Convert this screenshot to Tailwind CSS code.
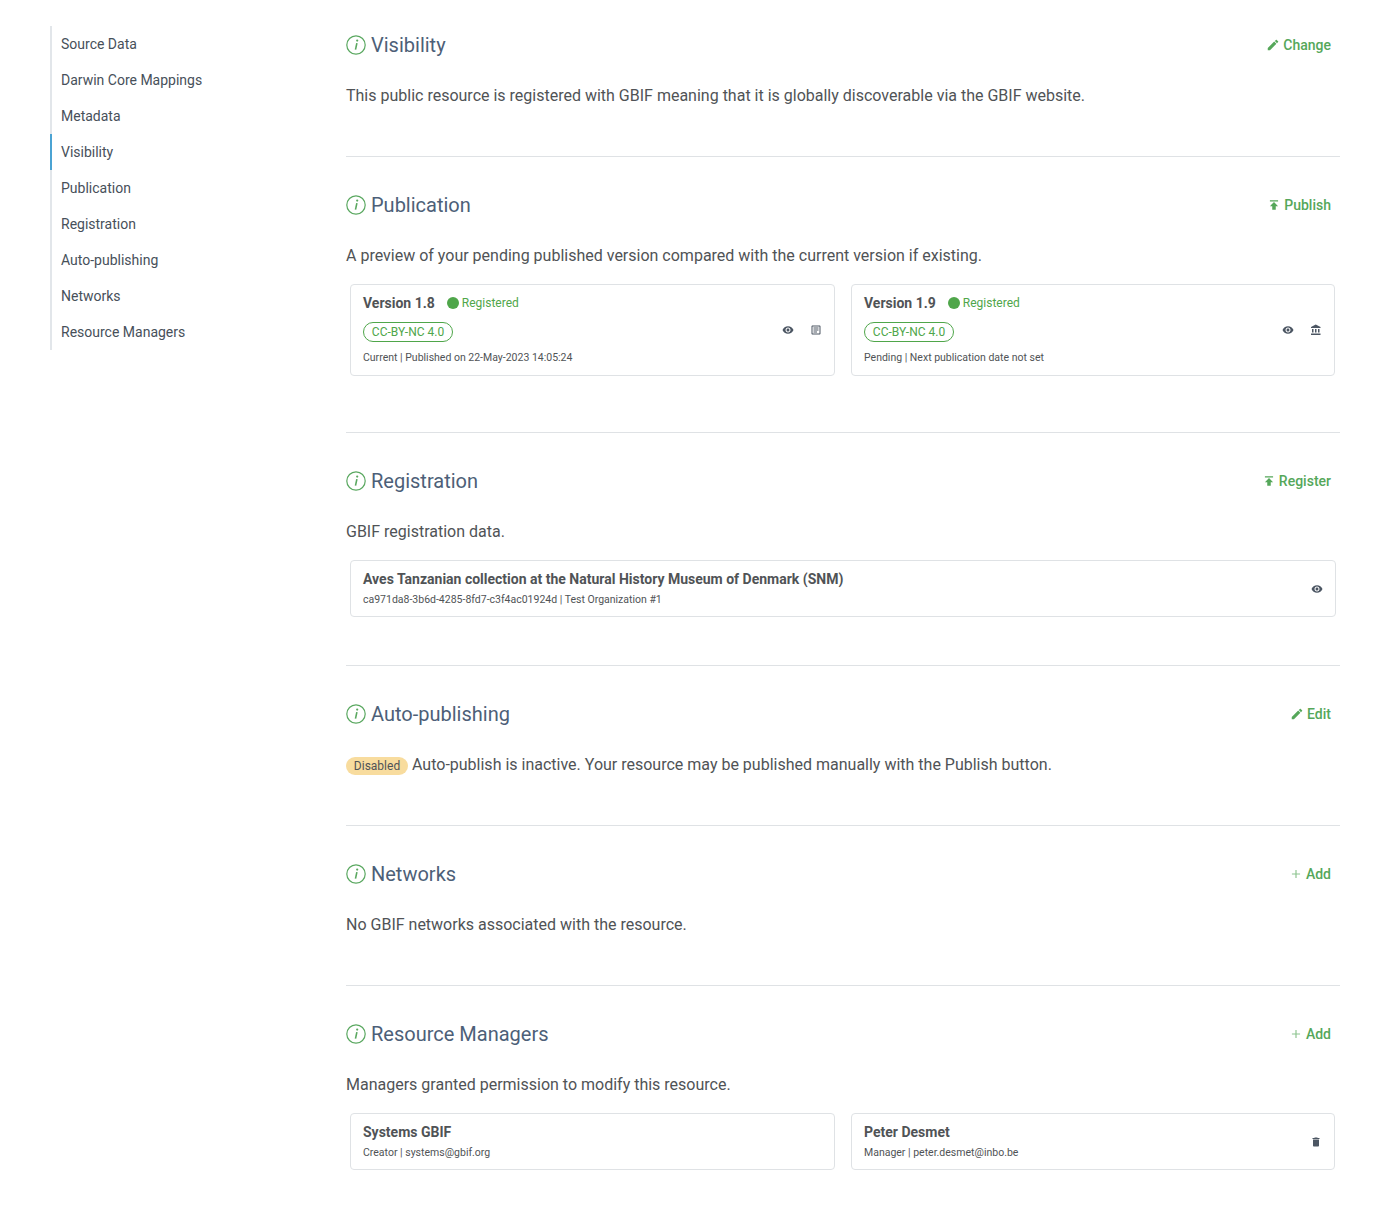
<!DOCTYPE html>
<html lang="en">
<head>
    <meta charset="UTF-8">
    <title>Resource Overview</title>
    <script src="https://cdn.jsdelivr.net/npm/@tailwindcss/browser@4"></script>
</head>
<body class="bg-white font-['Roboto',sans-serif] text-[#505356]">
    <div class="flex items-start">
        <!-- Sidebar -->
        <nav class="ml-[50px] mt-[26px] w-[296px] shrink-0">
            <ul class="border-l-2 border-[#e2e6ea] text-sm text-[#47505a] w-[250px]">
                <li class="h-9 leading-9 pl-[9px]">Source Data</li>
                <li class="h-9 leading-9 pl-[9px]">Darwin Core Mappings</li>
                <li class="h-9 leading-9 pl-[9px]">Metadata</li>
                <li class="h-9 leading-9 pl-[9px] -ml-0.5 border-l-2 border-[#4ba3d3]">Visibility</li>
                <li class="h-9 leading-9 pl-[9px]">Publication</li>
                <li class="h-9 leading-9 pl-[9px]">Registration</li>
                <li class="h-9 leading-9 pl-[9px]">Auto-publishing</li>
                <li class="h-9 leading-9 pl-[9px]">Networks</li>
                <li class="h-9 leading-9 pl-[9px]">Resource Managers</li>
            </ul>
        </nav>

        <main class="w-[994px] pt-[25px]">
            <!-- Visibility -->
            <section class="h-[132px] border-b border-[#dfe2e5]">
                <div class="flex items-center justify-between h-10 pr-[9px]">
                    <h2 class="flex items-center gap-[5px] text-xl text-[#4d5f78]">
                        <svg class="w-5 h-5" viewBox="0 0 20 20" fill="none" stroke="#5aa860"><circle cx="10" cy="10" r="9.2" stroke-width="1.2"/><path d="M10.9 8.2 9.5 14.6" stroke-width="1.6"/><circle cx="11.2" cy="5.6" r="1.1" fill="#5aa860" stroke="none"/></svg>
                        Visibility
                    </h2>
                    <a class="flex items-center gap-[3px] text-sm font-medium text-[#55a75a]">
                        <svg class="w-[14px] h-[14px]" viewBox="0 0 24 24" fill="currentColor"><path d="M3 17.25V21h3.75L17.81 9.94l-3.75-3.75L3 17.25zM20.71 7.04c.39-.39.39-1.02 0-1.41l-2.34-2.34c-.39-.39-1.02-.39-1.41 0l-1.83 1.83 3.75 3.75 1.83-1.83z"/></svg>
                        Change
                    </a>
                </div>
                <p class="mt-[19px] text-base leading-6">This public resource is registered with GBIF meaning that it is globally discoverable via the GBIF website.</p>
            </section>

            <!-- Publication -->
            <section class="h-[276px] pt-[28px] border-b border-[#dfe2e5]">
                <div class="flex items-center justify-between h-10 pr-[9px]">
                    <h2 class="flex items-center gap-[5px] text-xl text-[#4d5f78]">
                        <svg class="w-5 h-5" viewBox="0 0 20 20" fill="none" stroke="#5aa860"><circle cx="10" cy="10" r="9.2" stroke-width="1.2"/><path d="M10.9 8.2 9.5 14.6" stroke-width="1.6"/><circle cx="11.2" cy="5.6" r="1.1" fill="#5aa860" stroke="none"/></svg>
                        Publication
                    </h2>
                    <a class="flex items-center gap-[3px] text-sm font-medium text-[#55a75a]">
                        <svg class="w-[14px] h-[14px]" viewBox="0 0 24 24" fill="currentColor"><path d="M5 4v2h14V4H5zm0 10h4v6h6v-6h4l-7-7-7 7z"/></svg>
                        Publish
                    </a>
                </div>
                <p class="mt-[19px] text-base leading-6">A preview of your pending published version compared with the current version if existing.</p>
                <div class="mt-4 ml-1 grid grid-cols-[485px_484px] gap-4">
                    <div class="h-[92px] border border-[#dfe2e5] rounded flex items-center justify-between pl-3 pr-[12px]">
                        <div>
                            <div class="flex items-center h-[17px]">
                                <strong class="text-sm font-bold">Version 1.8</strong>
                                <span class="ml-3 w-3 h-3 rounded-full bg-[#4fa64a]"></span>
                                <span class="ml-[3px] text-xs text-[#4fa64a]">Registered</span>
                            </div>
                            <div class="mt-[10px] w-[90px] h-5 border border-[#4fa64a] rounded-[10px] text-xs leading-[18px] text-center text-[#4fa64a]">CC-BY-NC 4.0</div>
                            <p class="mt-2 text-[10.5px] leading-[16px]">Current | Published on 22-May-2023 14:05:24</p>
                        </div>
                        <div class="flex items-center gap-4 text-[#4c5663]">
                            <svg class="w-3 h-3" viewBox="0 0 24 24" fill="currentColor"><path d="M12 4.5C7 4.5 2.73 7.61 1 12c1.73 4.39 6 7.5 11 7.5s9.27-3.11 11-7.5c-1.73-4.39-6-7.5-11-7.5zM12 17c-2.76 0-5-2.24-5-5s2.24-5 5-5 5 2.24 5 5-2.24 5-5 5zm0-8c-1.66 0-3 1.34-3 3s1.34 3 3 3 3-1.34 3-3-1.34-3-3-3z"/></svg>
                            <svg class="w-3 h-3" viewBox="0 0 24 24" fill="currentColor"><path d="M19 3H5c-1.1 0-2 .9-2 2v14c0 1.1.9 2 2 2h14c1.1 0 2-.9 2-2V5c0-1.1-.9-2-2-2zm0 16H5V5h14v14z"/><path d="M7 7h10v2H7zm0 4h10v2H7zm0 4h7v2H7z"/></svg>
                        </div>
                    </div>
                    <div class="h-[92px] border border-[#dfe2e5] rounded flex items-center justify-between pl-3 pr-[12px]">
                        <div>
                            <div class="flex items-center h-[17px]">
                                <strong class="text-sm font-bold">Version 1.9</strong>
                                <span class="ml-3 w-3 h-3 rounded-full bg-[#4fa64a]"></span>
                                <span class="ml-[3px] text-xs text-[#4fa64a]">Registered</span>
                            </div>
                            <div class="mt-[10px] w-[90px] h-5 border border-[#4fa64a] rounded-[10px] text-xs leading-[18px] text-center text-[#4fa64a]">CC-BY-NC 4.0</div>
                            <p class="mt-2 text-[10.5px] leading-[16px]">Pending | Next publication date not set</p>
                        </div>
                        <div class="flex items-center gap-4 text-[#4c5663]">
                            <svg class="w-3 h-3" viewBox="0 0 24 24" fill="currentColor"><path d="M12 4.5C7 4.5 2.73 7.61 1 12c1.73 4.39 6 7.5 11 7.5s9.27-3.11 11-7.5c-1.73-4.39-6-7.5-11-7.5zM12 17c-2.76 0-5-2.24-5-5s2.24-5 5-5 5 2.24 5 5-2.24 5-5 5zm0-8c-1.66 0-3 1.34-3 3s1.34 3 3 3 3-1.34 3-3-1.34-3-3-3z"/></svg>
                            <svg class="w-3 h-3" viewBox="0 0 24 24" fill="currentColor"><path d="M4 10v7h3v-7H4zm6 0v7h3v-7h-3zM2 22h19v-3H2v3zm14-12v7h3v-7h-3zm-4.5-9L2 6v2h19V6l-9.5-5z"/></svg>
                        </div>
                    </div>
                </div>
            </section>

            <!-- Registration -->
            <section class="h-[233px] pt-[28px] border-b border-[#dfe2e5]">
                <div class="flex items-center justify-between h-10 pr-[9px]">
                    <h2 class="flex items-center gap-[5px] text-xl text-[#4d5f78]">
                        <svg class="w-5 h-5" viewBox="0 0 20 20" fill="none" stroke="#5aa860"><circle cx="10" cy="10" r="9.2" stroke-width="1.2"/><path d="M10.9 8.2 9.5 14.6" stroke-width="1.6"/><circle cx="11.2" cy="5.6" r="1.1" fill="#5aa860" stroke="none"/></svg>
                        Registration
                    </h2>
                    <a class="flex items-center gap-[3px] text-sm font-medium text-[#55a75a]">
                        <svg class="w-[14px] h-[14px]" viewBox="0 0 24 24" fill="currentColor"><path d="M5 4v2h14V4H5zm0 10h4v6h6v-6h4l-7-7-7 7z"/></svg>
                        Register
                    </a>
                </div>
                <p class="mt-[19px] text-base leading-6">GBIF registration data.</p>
                <div class="mt-4 ml-1 w-[986px] h-[57px] border border-[#dfe2e5] rounded flex items-center justify-between pl-3 pr-[12px]">
                    <div class="pt-0.5">
                        <strong class="block text-sm font-bold leading-[17px]">Aves Tanzanian collection at the Natural History Museum of Denmark (SNM)</strong>
                        <p class="mt-1 text-[10.5px] leading-[16px]">ca971da8-3b6d-4285-8fd7-c3f4ac01924d | Test Organization #1</p>
                    </div>
                    <svg class="w-3 h-3 text-[#4c5663]" viewBox="0 0 24 24" fill="currentColor"><path d="M12 4.5C7 4.5 2.73 7.61 1 12c1.73 4.39 6 7.5 11 7.5s9.27-3.11 11-7.5c-1.73-4.39-6-7.5-11-7.5zM12 17c-2.76 0-5-2.24-5-5s2.24-5 5-5 5 2.24 5 5-2.24 5-5 5zm0-8c-1.66 0-3 1.34-3 3s1.34 3 3 3 3-1.34 3-3-1.34-3-3-3z"/></svg>
                </div>
            </section>

            <!-- Auto-publishing -->
            <section class="h-[160px] pt-[28px] border-b border-[#dfe2e5]">
                <div class="flex items-center justify-between h-10 pr-[9px]">
                    <h2 class="flex items-center gap-[5px] text-xl text-[#4d5f78]">
                        <svg class="w-5 h-5" viewBox="0 0 20 20" fill="none" stroke="#5aa860"><circle cx="10" cy="10" r="9.2" stroke-width="1.2"/><path d="M10.9 8.2 9.5 14.6" stroke-width="1.6"/><circle cx="11.2" cy="5.6" r="1.1" fill="#5aa860" stroke="none"/></svg>
                        Auto-publishing
                    </h2>
                    <a class="flex items-center gap-[3px] text-sm font-medium text-[#55a75a]">
                        <svg class="w-[14px] h-[14px]" viewBox="0 0 24 24" fill="currentColor"><path d="M3 17.25V21h3.75L17.81 9.94l-3.75-3.75L3 17.25zM20.71 7.04c.39-.39.39-1.02 0-1.41l-2.34-2.34c-.39-.39-1.02-.39-1.41 0l-1.83 1.83 3.75 3.75 1.83-1.83z"/></svg>
                        Edit
                    </a>
                </div>
                <p class="mt-[19px] text-base leading-6 flex items-center">
                    <span class="inline-block mt-0.5 w-[62px] h-[18px] mr-1 rounded-full bg-[#f8dc9e] text-xs leading-[18px] text-center">Disabled</span>
                    Auto-publish is inactive. Your resource may be published manually with the Publish button.
                </p>
            </section>

            <!-- Networks -->
            <section class="h-[160px] pt-[28px] border-b border-[#dfe2e5]">
                <div class="flex items-center justify-between h-10 pr-[9px]">
                    <h2 class="flex items-center gap-[5px] text-xl text-[#4d5f78]">
                        <svg class="w-5 h-5" viewBox="0 0 20 20" fill="none" stroke="#5aa860"><circle cx="10" cy="10" r="9.2" stroke-width="1.2"/><path d="M10.9 8.2 9.5 14.6" stroke-width="1.6"/><circle cx="11.2" cy="5.6" r="1.1" fill="#5aa860" stroke="none"/></svg>
                        Networks
                    </h2>
                    <a class="flex items-center gap-[3px] text-sm font-medium text-[#55a75a]">
                        <svg class="w-[14px] h-[14px]" viewBox="0 0 24 24" fill="#8cc48f"><path d="M19 13h-6v6h-2v-6H5v-2h6V5h2v6h6v2z"/></svg>
                        Add
                    </a>
                </div>
                <p class="mt-[19px] text-base leading-6">No GBIF networks associated with the resource.</p>
            </section>

            <!-- Resource Managers -->
            <section class="pt-[28px]">
                <div class="flex items-center justify-between h-10 pr-[9px]">
                    <h2 class="flex items-center gap-[5px] text-xl text-[#4d5f78]">
                        <svg class="w-5 h-5" viewBox="0 0 20 20" fill="none" stroke="#5aa860"><circle cx="10" cy="10" r="9.2" stroke-width="1.2"/><path d="M10.9 8.2 9.5 14.6" stroke-width="1.6"/><circle cx="11.2" cy="5.6" r="1.1" fill="#5aa860" stroke="none"/></svg>
                        Resource Managers
                    </h2>
                    <a class="flex items-center gap-[3px] text-sm font-medium text-[#55a75a]">
                        <svg class="w-[14px] h-[14px]" viewBox="0 0 24 24" fill="#8cc48f"><path d="M19 13h-6v6h-2v-6H5v-2h6V5h2v6h6v2z"/></svg>
                        Add
                    </a>
                </div>
                <p class="mt-[19px] text-base leading-6">Managers granted permission to modify this resource.</p>
                <div class="mt-4 ml-1 grid grid-cols-[485px_484px] gap-4">
                    <div class="h-[57px] border border-[#dfe2e5] rounded flex items-center pl-3">
                        <div class="pt-0.5">
                            <strong class="block text-sm font-bold leading-[17px]">Systems GBIF</strong>
                            <p class="mt-1 text-[10.5px] leading-[16px]">Creator | systems@gbif.org</p>
                        </div>
                    </div>
                    <div class="h-[57px] border border-[#dfe2e5] rounded flex items-center justify-between pl-3 pr-[12px]">
                        <div class="pt-0.5">
                            <strong class="block text-sm font-bold leading-[17px]">Peter Desmet</strong>
                            <p class="mt-1 text-[10.5px] leading-[16px]">Manager | peter.desmet@inbo.be</p>
                        </div>
                        <svg class="w-3 h-3 text-[#4c5663]" viewBox="0 0 24 24" fill="currentColor"><path d="M6 19c0 1.1.9 2 2 2h8c1.1 0 2-.9 2-2V7H6v12zM19 4h-3.5l-1-1h-5l-1 1H5v2h14V4z"/></svg>
                    </div>
                </div>
            </section>
        </main>
    </div>
</body>
</html>
